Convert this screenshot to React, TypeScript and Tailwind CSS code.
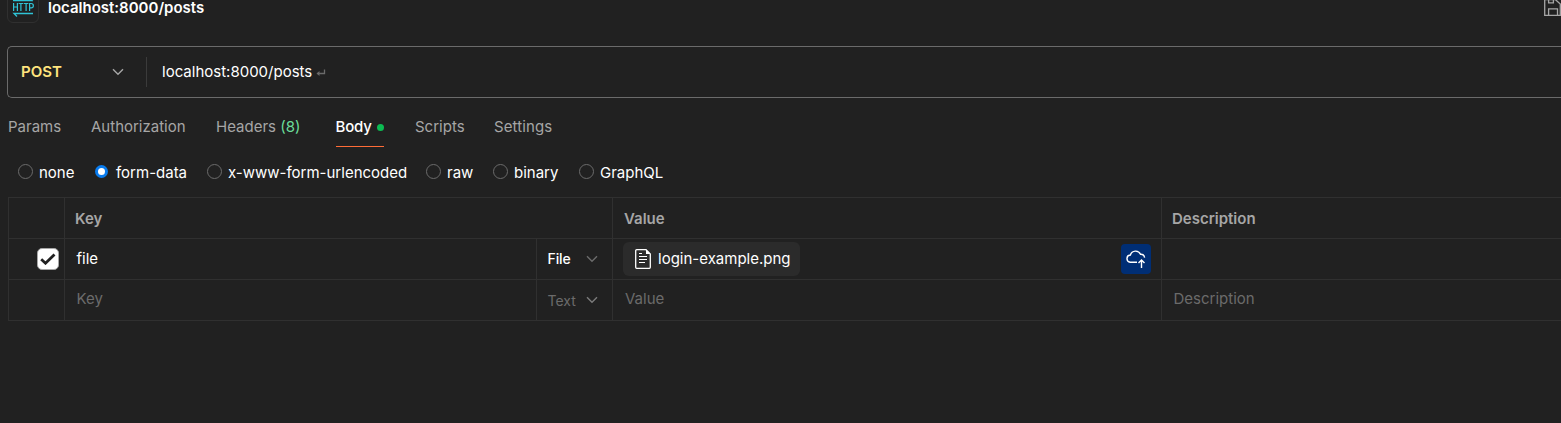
import React from 'react';

function Chevron({ className }: { className: string }) {
  return (
    <svg width="12" height="8" viewBox="0 0 12 8" fill="none" className={`shrink-0 ${className}`}>
      <path d="M1 1.2L6 6.2L11 1.2" stroke="currentColor" strokeWidth="1.4" />
    </svg>
  );
}

function HttpIcon() {
  return (
    <svg width="22" height="25" viewBox="0 0 22 25" fill="none" className="shrink-0">
      <path d="M1 8.4H21M17.5 5L21 8.4" stroke="#2fc4d6" strokeWidth="1.5" />
      <path d="M21 21.5H2L5 24.5" stroke="#2fc4d6" strokeWidth="1.3" />
      <path
        d="M1.6 11v8M5.4 11v8M1.6 15h3.8M6.6 11.5h4.6M8.9 11.5V19M11.8 11.5h4.6M14.1 11.5V19M17.6 19v-7.5h1.6a2 2 0 0 1 0 4.3h-1.6"
        stroke="#2fc4d6"
        strokeWidth="1.2"
      />
    </svg>
  );
}

function FileIcon() {
  return (
    <svg width="16" height="20" viewBox="0 0 16 20" fill="none" className="shrink-0">
      <path d="M11 .7H1.7a1 1 0 0 0-1 1v16.6a1 1 0 0 0 1 1h12.6a1 1 0 0 0 1-1V5z" stroke="#fff" strokeWidth="1.3" />
      <path d="M11 .5L15.5 5H11z" fill="#fff" />
      <path d="M4 4.5h3M4 7.5h8M4 10.5h8M4 13.5h6" stroke="#fff" strokeWidth="1.1" />
    </svg>
  );
}

function CloudUpload() {
  return (
    <svg width="20" height="20" viewBox="0 0 20 20" fill="none" className="shrink-0">
      <path
        d="M11 13.2H4.2A3.6 3.6 0 0 1 1 9.4 3.6 3.6 0 0 1 4.4 6 5.4 5.4 0 0 1 14.5 5.3 3.9 3.9 0 0 1 18.6 8.6"
        stroke="#fff"
        strokeWidth="1.4"
      />
      <path d="M15.5 19V11M12.5 14L15.5 11L18.5 14" stroke="#fff" strokeWidth="1.4" />
    </svg>
  );
}

function SaveIcon() {
  return (
    <svg width="17" height="17" viewBox="0 0 17 17" fill="none" className="shrink-0">
      <path d="M.7 .7H11.5L16.3 5V16.3H.7z" stroke="#a6a6a6" strokeWidth="1.3" />
      <path d="M4.6 .7V3.8H9.4V.7M4.6 16.3V9.8H13.5V16.3" stroke="#a6a6a6" strokeWidth="1.3" />
    </svg>
  );
}

function Radio({ label, checked, className }: { label: string; checked?: boolean; className: string }) {
  return (
    <label className={`flex shrink-0 items-center ${className}`}>
      {checked ? (
        <span className="-mt-0.5 mr-2 flex h-[13px] w-[13px] items-center justify-center rounded-full bg-[#097bed]">
          <span className="h-[7px] w-[7px] rounded-full bg-white" />
        </span>
      ) : (
        <span className="-mt-0.5 mr-1.5 h-[15px] w-[15px] rounded-full border border-[#6b6b6b]" />
      )}
      <span className="leading-5">{label}</span>
    </label>
  );
}

export default function App() {
  return (
    <div className="h-[423px] w-[1561px] overflow-hidden bg-[#212121] font-['Inter',sans-serif] text-[15px] whitespace-nowrap text-white">
      <header className="flex h-[46px] items-start pl-[7px]">
        <div className="-mt-[9px] flex h-8 w-8 shrink-0 items-start justify-center rounded-md border border-[#303030]">
          <HttpIcon />
        </div>
        <h1 className="ml-[9px] h-[18px] w-[1496px] shrink-0 text-[15px] leading-4 font-semibold">
          localhost:8000/posts
        </h1>
        <div className="-mt-px">
          <SaveIcon />
        </div>
      </header>

      <div className="ml-[7px] flex h-[52px] items-center rounded-l-[5px] border border-r-0 border-[#6b6b6b]">
        <div className="flex w-[138px] items-center justify-between pr-[22px] pl-[13px]">
          <span className="pt-px font-semibold text-[#ffe47e]">POST</span>
          <Chevron className="text-[#a6a6a6]" />
        </div>
        <div className="h-[30px] w-px bg-[#3b3b3b]" />
        <span className="ml-[15px] leading-5">localhost:8000/posts</span>
        <svg width="10" height="8" viewBox="0 0 10 8" fill="none" className="mt-0.5 ml-1">
          <path d="M8.5 .5V4.5H1.5" stroke="#6b6b6b" strokeWidth="1.3" />
          <path d="M3.5 2V7L.5 4.5z" fill="#6b6b6b" />
        </svg>
      </div>

      <nav className="flex h-[49px] items-start pt-[19px] pl-2 leading-5 text-[#a6a6a6]">
        <span className="w-[83px]">Params</span>
        <span className="w-[125px]">Authorization</span>
        <span className="w-[119.5px]">
          Headers <span className="text-[#6bdd9a]">(8)</span>
        </span>
        <span className="mr-[31px] flex h-[30px] w-[48.5px] justify-between border-b-[1.5px] border-[#ff6c37] font-medium text-white">
          <span className="tracking-[-0.2px]">Body</span>
          <span className="mt-[7px] h-[7px] w-[7px] rounded-full bg-[#0cbb52]" />
        </span>
        <span className="w-[79px]">Scripts</span>
        <span className="tracking-[0.1px]">Settings</span>
      </nav>

      <div className="flex h-[50px] items-center pt-px pl-[18px]">
        <Radio label="none" className="w-[77px]" />
        <Radio label="form-data" checked className="w-[112px]" />
        <Radio label="x-www-form-urlencoded" className="w-[219px]" />
        <Radio label="raw" className="w-[67px]" />
        <Radio label="binary" className="w-[86px]" />
        <Radio label="GraphQL" className="" />
      </div>

      <div className="ml-2 grid grid-cols-[56px_472px_76px_549px_400px] grid-rows-[41px_41px_41px] border-l border-t border-[#303030] [&>div]:flex [&>div]:items-center [&>div]:border-b [&>div]:border-r [&>div]:border-[#303030]">
        <div />
        <div className="col-span-2 pt-0.5 pl-2.5 font-semibold text-[#a6a6a6]">Key</div>
        <div className="pt-0.5 pl-[11px] font-semibold text-[#a6a6a6]">Value</div>
        <div className="pt-0.5 pl-2.5 font-semibold text-[#a6a6a6]">Description</div>

        <div className="justify-end pr-[5px]">
          <span className="flex h-[22px] w-[22px] items-center justify-center rounded-[5px] border border-[#a6a6a6] bg-white">
            <svg width="16" height="12" viewBox="0 0 16 12" fill="none">
              <path d="M1.2 6.2L5.5 10.2L14.5 1.5" stroke="#212121" strokeWidth="2.8" />
            </svg>
          </span>
        </div>
        <div className="pl-[11.5px]">file</div>
        <div className="justify-between pr-3.5 pl-[10.5px] text-[14px] font-medium">
          <span className="-mt-px tracking-[-0.1px]">File</span>
          <Chevron className="text-[#6b6b6b]" />
        </div>
        <div className="justify-between pr-2.5 pl-2.5">
          <span className="flex h-[34px] w-[177px] items-center gap-[7px] rounded-md bg-[#2b2b2b] pl-3">
            <FileIcon />
            login-example.png
          </span>
          <span className="flex h-[30px] w-[30px] items-center justify-center rounded bg-[#002e75]">
            <CloudUpload />
          </span>
        </div>
        <div />

        <div />
        <div className="pb-px pl-[11.5px] text-[#6b6b6b]">Key</div>
        <div className="justify-between pr-3.5 pl-[10.5px] text-[14px] text-[#6b6b6b]">
          Text
          <Chevron className="text-[#7b7b7b]" />
        </div>
        <div className="pb-px pl-3 text-[#6b6b6b]">Value</div>
        <div className="pb-px pl-[11.5px] text-[#6b6b6b]">Description</div>
      </div>
    </div>
  );
}
